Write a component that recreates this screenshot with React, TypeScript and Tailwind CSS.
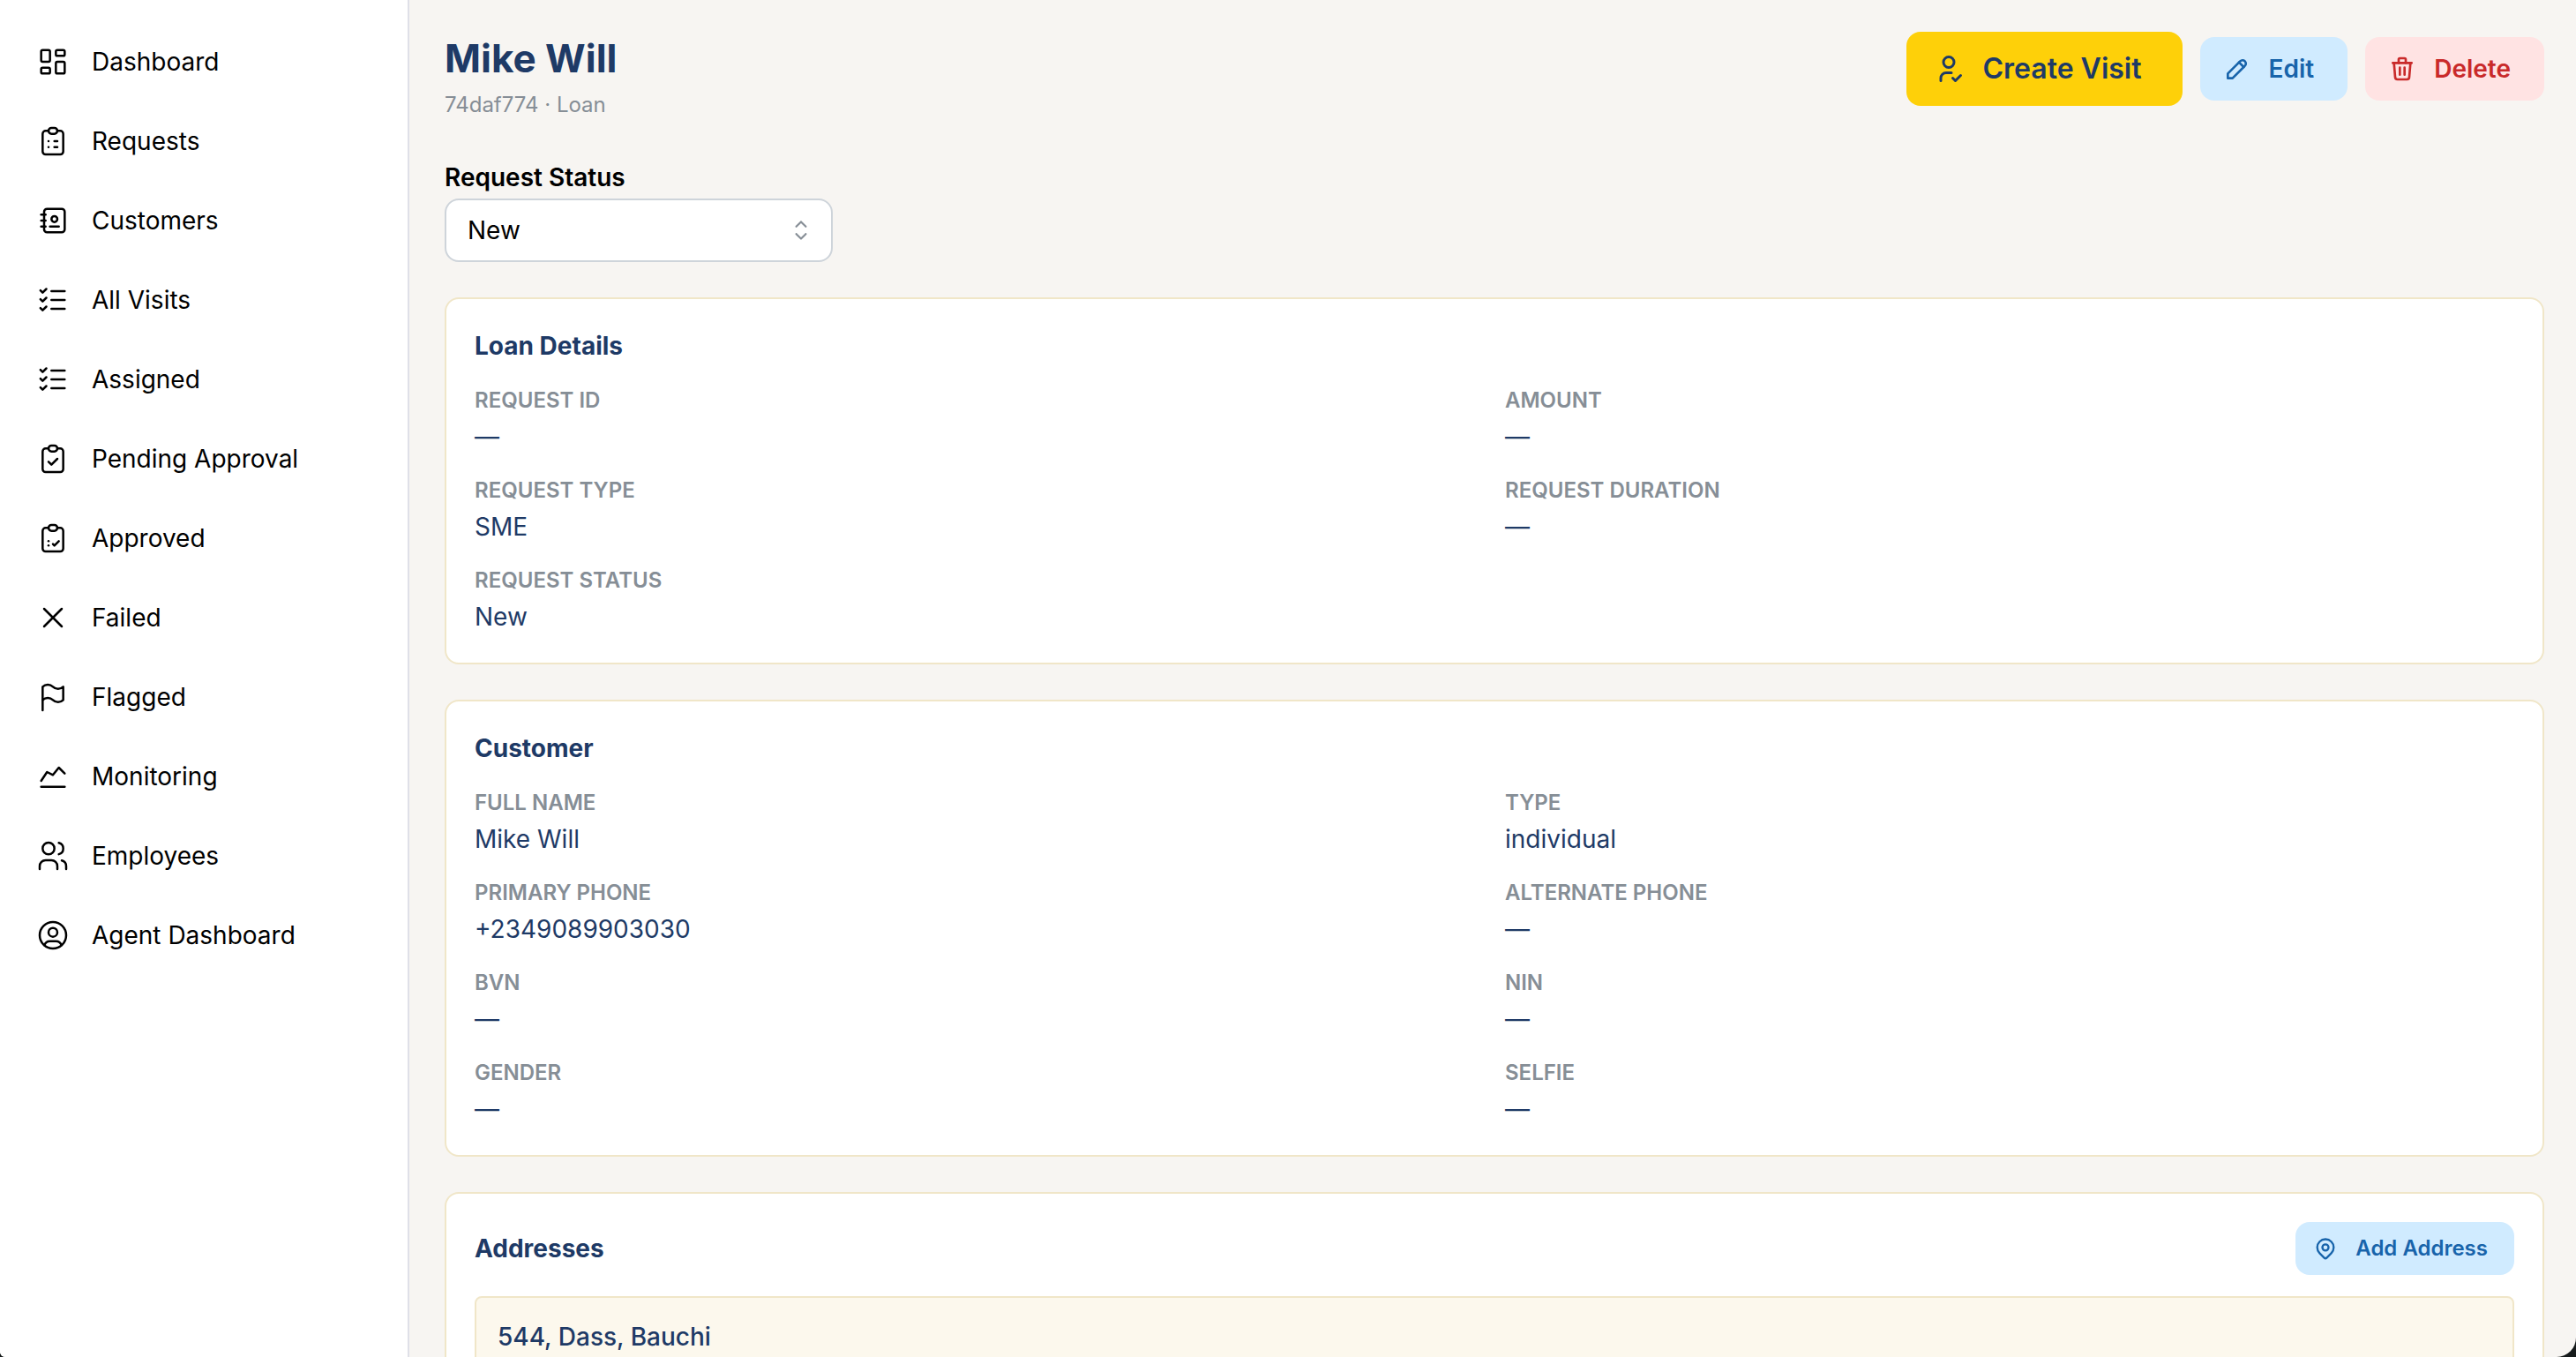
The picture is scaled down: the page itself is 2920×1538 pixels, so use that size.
import { useState } from "react";
import type { ReactNode } from "react";
import type { IconType } from "react-icons";
import {
  TbAddressBook,
  TbChartLine,
  TbCheckupList,
  TbClipboardCheck,
  TbClipboardList,
  TbFlag,
  TbLayoutDashboard,
  TbListCheck,
  TbMapPin,
  TbPencil,
  TbTrash,
  TbUserCheck,
  TbUserCircle,
  TbUsers,
  TbX,
} from "react-icons/tb";

interface NavItem {
  label: string;
  href: string;
  icon: IconType;
}

interface Field {
  label: string;
  value?: string;
}

const navItems: NavItem[] = [
  { label: "Dashboard", href: "#dashboard", icon: TbLayoutDashboard },
  { label: "Requests", href: "#requests", icon: TbClipboardList },
  { label: "Customers", href: "#customers", icon: TbAddressBook },
  { label: "All Visits", href: "#visits", icon: TbListCheck },
  { label: "Assigned", href: "#assigned", icon: TbListCheck },
  { label: "Pending Approval", href: "#pending", icon: TbClipboardCheck },
  { label: "Approved", href: "#approved", icon: TbCheckupList },
  { label: "Failed", href: "#failed", icon: TbX },
  { label: "Flagged", href: "#flagged", icon: TbFlag },
  { label: "Monitoring", href: "#monitoring", icon: TbChartLine },
  { label: "Employees", href: "#employees", icon: TbUsers },
  { label: "Agent Dashboard", href: "#agent", icon: TbUserCircle },
];

const statuses = ["New", "Assigned", "Pending", "Approved", "Failed"];

const customerFields: Field[] = [
  { label: "Full Name", value: "Mike Will" },
  { label: "Type", value: "individual" },
  { label: "Primary Phone", value: "+2349089903030" },
  { label: "Alternate Phone" },
  { label: "BVN" },
  { label: "NIN" },
  { label: "Gender" },
  { label: "Selfie" },
];

function Sidebar() {
  return (
    <nav className="w-[464px] shrink-0 border-r-2 border-[#dfe0e8] bg-white pt-[25px]">
      {navItems.map(({ label, href, icon: Icon }) => (
        <a
          key={label}
          href={href}
          className="flex h-[90px] items-center gap-6 px-10 text-[28px] text-black"
        >
          <Icon size={40} strokeWidth={1.5} />
          {label}
        </a>
      ))}
    </nav>
  );
}

function Card({ children }: { children: ReactNode }) {
  return (
    <section className="rounded-2xl border-2 border-[#f0e6c8] bg-white px-8 pt-8 pb-[31px]">
      {children}
    </section>
  );
}

function CardTitle({ children }: { children: ReactNode }) {
  return (
    <h2 className="text-[28px] leading-[43px] font-bold text-[#1e3a66]">
      {children}
    </h2>
  );
}

function FieldGrid({ fields }: { fields: Field[] }) {
  return (
    <dl className="mt-5 grid grid-cols-2 gap-x-6 gap-y-5">
      {fields.map((field) => (
        <div key={field.label}>
          <dt className="text-2xl leading-[40px] font-semibold text-[#868e96] uppercase">
            {field.label}
          </dt>
          <dd className="text-[28px] leading-[42px] text-[#1e3a66]">
            {field.value ?? "—"}
          </dd>
        </div>
      ))}
    </dl>
  );
}

function SelectChevron() {
  return (
    <svg
      viewBox="0 0 15 15"
      fill="currentColor"
      className="pointer-events-none absolute top-[18px] right-[18px] size-9 text-[#868e96]"
    >
      <path d="M4.93179 5.43179C4.75605 5.60753 4.75605 5.89245 4.93179 6.06819C5.10753 6.24392 5.39245 6.24392 5.56819 6.06819L7.49999 4.13638L9.43179 6.06819C9.60753 6.24392 9.89245 6.24392 10.0682 6.06819C10.2439 5.89245 10.2439 5.60753 10.0682 5.43179L7.81819 3.18179C7.73379 3.0974 7.61933 3.04999 7.49999 3.04999C7.38064 3.04999 7.26618 3.0974 7.18179 3.18179L4.93179 5.43179ZM10.0682 9.56819C10.2439 9.39245 10.2439 9.10753 10.0682 8.93179C9.89245 8.75606 9.60753 8.75606 9.43179 8.93179L7.49999 10.8636L5.56819 8.93179C5.39245 8.75606 5.10753 8.75606 4.93179 8.93179C4.75605 9.10753 4.75605 9.39245 4.93179 9.56819L7.18179 11.8182C7.35753 11.9939 7.64245 11.9939 7.81819 11.8182L10.0682 9.56819Z" />
    </svg>
  );
}

export default function App() {
  const [status, setStatus] = useState("New");

  const loanFields: Field[] = [
    { label: "Request ID" },
    { label: "Amount" },
    { label: "Request Type", value: "SME" },
    { label: "Request Duration" },
    { label: "Request Status", value: status },
  ];

  return (
    <div className="h-screen bg-[#161b1b] font-['Inter',sans-serif]">
      <div className="flex h-full overflow-hidden rounded-br-[22px] rounded-bl-[6px] bg-[#f7f5f2]">
        <Sidebar />

        <main className="flex min-w-0 flex-1 flex-col gap-10 pt-9 pr-9 pl-10">
          <header className="flex items-start justify-between">
            <div>
              <h1 className="text-[44px] leading-[60px] font-bold text-[#1e3a66]">
                Mike Will
              </h1>
              <p className="mt-0.5 text-2xl leading-[42px] text-[#868e96]">
                74daf774 · Loan
              </p>
            </div>
            <div className="flex items-center gap-5">
              <button
                type="button"
                className="flex h-[84px] items-center gap-5 rounded-2xl bg-[#fed009] pr-[46px] pl-[30px] text-[32px] font-semibold text-[#1e3a66]"
              >
                <TbUserCheck size={36} strokeWidth={2} />
                Create Visit
              </button>
              <button
                type="button"
                className="flex h-[72px] items-center gap-5 rounded-2xl bg-[#d0ebff] pr-[38px] pl-[26px] text-[28px] font-semibold text-[#1864ab]"
              >
                <TbPencil size={32} strokeWidth={2} />
                Edit
              </button>
              <button
                type="button"
                className="flex h-[72px] items-center gap-5 rounded-2xl bg-[#ffe3e3] pr-[38px] pl-[26px] text-[28px] font-semibold text-[#c92a2a]"
              >
                <TbTrash size={32} strokeWidth={2} />
                Delete
              </button>
            </div>
          </header>

          <div className="w-[440px]">
            <label
              htmlFor="request-status"
              className="mb-0.5 block text-[28px] leading-[43px] font-semibold text-black"
            >
              Request Status
            </label>
            <div className="relative">
              <select
                id="request-status"
                value={status}
                onChange={(e) => setStatus(e.target.value)}
                className="h-[72px] w-full appearance-none rounded-2xl border-2 border-[#ced4da] bg-white px-6 text-[28px] text-black"
              >
                {statuses.map((s) => (
                  <option key={s}>{s}</option>
                ))}
              </select>
              <SelectChevron />
            </div>
          </div>

          <Card>
            <CardTitle>Loan Details</CardTitle>
            <FieldGrid fields={loanFields} />
          </Card>

          <Card>
            <CardTitle>Customer</CardTitle>
            <FieldGrid fields={customerFields} />
          </Card>

          <Card>
            <div className="flex items-center justify-between">
              <CardTitle>Addresses</CardTitle>
              <button
                type="button"
                className="flex h-[60px] items-center gap-5 rounded-2xl bg-[#d0ebff] pr-[30px] pl-5 text-2xl font-semibold text-[#1864ab]"
              >
                <TbMapPin size={28} strokeWidth={2} />
                Add Address
              </button>
            </div>
            <div className="mt-6 rounded-lg border-2 border-[#f0e6c8] bg-[#fcf8ed] px-6 py-[22px]">
              <p className="text-[28px] leading-[44px] font-medium text-[#1e3a66]">
                544, Dass, Bauchi
              </p>
            </div>
          </Card>
        </main>
      </div>
    </div>
  );
}
